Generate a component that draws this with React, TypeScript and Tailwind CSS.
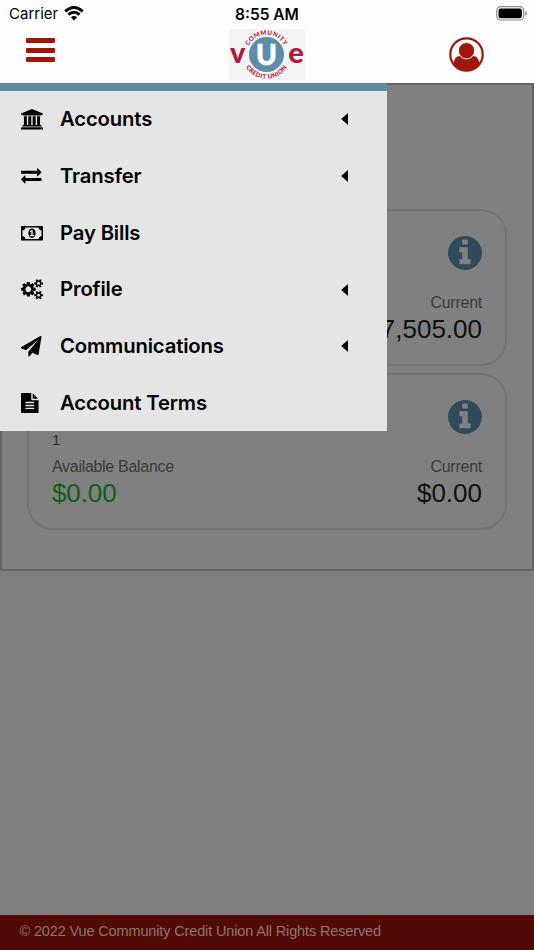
import type { ReactNode } from "react";

const icons = {
  bank: "M960 0l960 384v128h-128q0 26-20.5 45t-48.5 19h-1526q-28 0-48.5-19t-20.5-45h-128v-128zM256 640h256v768h128v-768h256v768h128v-768h256v768h128v-768h256v768h59q28 0 48.5 19t20.5 45v64h-1664v-64q0-26 20.5-45t48.5-19h59v-768zM1851 1600q28 0 48.5 19t20.5 45v128h-1920v-128q0-26 20.5-45t48.5-19h1782z",
  exchange: "M1792 1088v192q0 13-9.500 22.500t-22.500 9.500h-1376v192q0 13-9.500 22.500t-22.500 9.500q-12 0-24-10l-319-320q-9-9-9-22 0-14 9-23l320-320q9-9 23-9 13 0 22.500 9.500t9.500 22.500v192h1376q13 0 22.500 9.500t9.500 22.500zM1792 544q0 14-9 23l-320 320q-9 9-23 9-13 0-22.500-9.500t-9.500-22.500v-192h-1376q-13 0-22.500-9.500t-9.500-22.500v-192q0-13 9.500-22.500t22.500-9.500h1376v-192q0-14 9-23t23-9q12 0 24 10l319 319q9 9 9 23z",
  money: "M768 1152h384v-96h-128v-448h-114l-148 137 77 80q42-37 55-57h2v288h-128v96zM1280 896q0 70-21 142t-59.500 134-101.500 101-138 39-138-39-101.500-101-59.500-134-21-142 21-142 59.500-134 101.500-101 138-39 138 39 101.500 101 59.500 134 21 142zM1792 1152v-512q-106 0-181-75t-75-181h-1152q0 106-75 181t-181 75v512q106 0 181 75t75 181h1152q0-106 75-181t181-75zM1920 320v1152q0 26-19 45t-45 19h-1792q-26 0-45-19t-19-45v-1152q0-26 19-45t45-19h1792q26 0 45 19t19 45z",
  cogs: "M896 896q0-106-75-181t-181-75-181 75-75 181 75 181 181 75 181-75 75-181zm768 512q0-52-38-90t-90-38-90 38-38 90q0 53 37.500 90.500t90.500 37.500 90.500-37.500 37.500-90.500zm0-1024q0-52-38-90t-90-38-90 38-38 90q0 53 37.500 90.500t90.500 37.500 90.500-37.500 37.500-90.500zm-384 421v185q0 10-7 19.500t-16 10.500l-155 24q-11 35-32 76 34 48 90 115 7 11 7 20 0 12-7 19-23 30-82.500 89.500t-78.500 59.500q-11 0-21-7l-115-90q-37 19-77 31-11 108-23 155-7 24-30 24h-186q-11 0-20-7.500t-10-17.500l-23-153q-34-10-75-31l-118 89q-7 7-20 7-11 0-21-8-144-133-144-160 0-9 7-19 10-14 41-53t47-61q-23-44-35-82l-152-24q-10-1-17-9.500t-7-19.500v-185q0-10 7-19.500t16-10.500l155-24q11-35 32-76-34-48-90-115-7-11-7-20 0-12 7-20 22-30 82-89t79-59q11 0 21 7l115 90q34-18 77-32 11-108 23-154 7-24 30-24h186q11 0 20 7.500t10 17.500l23 153q34 10 75 31l118-89q8-7 20-7 11 0 21 8 144 133 144 160 0 8-7 19-12 16-42 54t-45 60q23 48 34 82l152 23q10 2 17 10.500t7 19.500zm640 533v140q0 16-149 31-12 27-30 52 51 113 51 138 0 4-4 7-122 71-124 71-8 0-46-47t-52-68q-20 2-30 2t-30-2q-14 21-52 68t-46 47q-2 0-124-71-4-3-4-7 0-25 51-138-18-25-30-52-149-15-149-31v-140q0-16 149-31 13-29 30-52-51-113-51-138 0-4 4-7 4-2 35-20t59-34 30-16q8 0 46 46.500t52 67.500q20-2 30-2t30 2q51-71 92-112l6-2q4 0 124 70 4 3 4 7 0 25-51 138 17 23 30 52 149 15 149 31zm0-1024v140q0 16-149 31-12 27-30 52 51 113 51 138 0 4-4 7-122 71-124 71-8 0-46-47t-52-68q-20 2-30 2t-30-2q-14 21-52 68t-46 47q-2 0-124-71-4-3-4-7 0-25 51-138-18-25-30-52-149-15-149-31v-140q0-16 149-31 13-29 30-52-51-113-51-138 0-4 4-7 4-2 35-20t59-34 30-16q8 0 46 46.500t52 67.500q20-2 30-2t30 2q51-71 92-112l6-2q4 0 124 70 4 3 4 7 0 25-51 138 17 23 30 52 149 15 149 31z",
  plane: "M1764 11q33 24 27 64l-256 1536q-5 29-32 45-14 8-31 8-11 0-24-5l-453-185-242 295q-18 23-49 23-13 0-22-4-19-7-30.500-23.500t-11.500-36.500v-349l864-1059-1069 925-395-162q-37-14-40-55-2-40 32-59l1664-960q15-9 32-9 20 0 36 11z",
  file: "M1468 476q14 14 28 36h-472v-472q22 14 36 28zM992 640h544v1056q0 40-28 68t-68 28h-1344q-40 0-68-28t-28-68v-1600q0-40 28-68t68-28h800v544q0 40 28 68t68 28zM1152 1376v-64q0-14-9-23t-23-9h-704q-14 0-23 9t-9 23v64q0 14 9 23t23 9h704q14 0 23-9t9-23zM1152 1120v-64q0-14-9-23t-23-9h-704q-14 0-23 9t-9 23v64q0 14 9 23t23 9h704q14 0 23-9t9-23zM1152 864v-64q0-14-9-23t-23-9h-704q-14 0-23 9t-9 23v64q0 14 9 23t23 9h704q14 0 23-9t9-23z",
  info: "M1152 1376v-160q0-14-9-23t-23-9h-96v-512q0-14-9-23t-23-9h-320q-14 0-23 9t-9 23v160q0 14 9 23t23 9h96v320h-96q-14 0-23 9t-9 23v160q0 14 9 23t23 9h448q14 0 23-9t9-23zM1024 480v-160q0-14-9-23t-23-9h-192q-14 0-23 9t-9 23v160q0 14 9 23t23 9h192q14 0 23-9t9-23zM1664 896q0 209-103 385.500t-279.500 279.500-385.500 103-385.500-103-279.500-279.500-103-385.500 103-385.500 279.500-279.500 385.500-103 385.500 103 279.500 279.500 103 385.500z",
};

const menu = [
  { label: "Accounts", icon: icons.bank, expandable: true },
  { label: "Transfer", icon: icons.exchange, expandable: true },
  { label: "Pay Bills", icon: icons.money, expandable: false },
  { label: "Profile", icon: icons.cogs, expandable: true },
  { label: "Communications", icon: icons.plane, expandable: true },
  { label: "Account Terms", icon: icons.file, expandable: false },
];

function StatusBar() {
  return (
    <div className="grid h-[28px] grid-cols-3 items-center leading-[27px] text-black">
      <div className="flex items-center gap-[6px] pb-px pl-[9px]">
        <span className="text-[15px]">Carrier</span>
        <svg className="h-[15px] w-5" viewBox="0 0 20 15" fill="none" stroke="#000" strokeWidth="2.9">
          <path d="M1.300 5.300Q10-2.300 18.700 5.300" />
          <path d="M4.400 8.700Q10 3.700 15.600 8.700" />
          <path d="M6.900 11.200Q10 8.600 13.100 11.200L10 14.400Z" fill="#000" stroke="none" />
        </svg>
      </div>
      <span className="text-center text-[15.500px] font-semibold">8:55 AM</span>
      <div className="flex justify-end pr-[7px] pb-px">
        <svg className="h-[15px] w-[31px]" viewBox="0 0 31 15">
          <rect x="0.700" y="0.700" width="27" height="13.300" rx="4" fill="none" stroke="#8c8c8c" strokeWidth="1.200" />
          <rect x="2.500" y="2.500" width="23.400" height="9.700" rx="2.300" />
          <path d="M29.200 5v4.800q1.700-.8 1.700-2.400T29.200 5z" fill="#8c8c8c" />
        </svg>
      </div>
    </div>
  );
}

function Logo() {
  return (
    <svg className="h-[51px] w-[76px] bg-[#f4f4f4]" viewBox="0 0 76 51">
      <defs>
        <path id="arc-top" d="M17.700 25.500A19.800 19.800 0 0 1 57.300 25.500" />
        <path id="arc-bottom" d="M13.300 25.500A24.200 24.200 0 0 0 61.700 25.500" />
      </defs>
      <circle cx="37.500" cy="25.500" r="17.500" fill="#5f8da8" />
      <g fontFamily="Lato, sans-serif" fontWeight="900" fill="#b5173b" textAnchor="middle">
        <text x="8.700" y="33.500" fontSize="29">v</text>
        <text x="67" y="33.500" fontSize="29">e</text>
        <text x="37.500" y="36" fontSize="28" fill="#fff" stroke="#fff" strokeWidth="0.600">U</text>
        <g fontSize="6.200">
          <text letterSpacing="0.450"><textPath href="#arc-top" startOffset="50%">COMMUNITY</textPath></text>
          <text letterSpacing="0.400"><textPath href="#arc-bottom" startOffset="50%">CREDIT UNION</textPath></text>
        </g>
      </g>
    </svg>
  );
}

function Header() {
  return (
    <header className="h-[83px] bg-[#fefefe] font-['Inter',sans-serif]">
      <StatusBar />
      <div className="flex h-[55px] items-start justify-between pr-[50px] pl-[26px]">
        <button aria-label="Menu" className="flex w-[53px] flex-col gap-[4.500px] pt-[10px]">
          <span className="h-[5px] w-[29px] rounded-[1px] bg-[#a1160c]" />
          <span className="h-[5px] w-[29px] rounded-[1px] bg-[#a1160c]" />
          <span className="h-[5px] w-[29px] rounded-[1px] bg-[#a1160c]" />
        </button>
        <div className="pt-px pl-[23px]">
          <Logo />
        </div>
        <button aria-label="User" className="flex w-[53px] justify-end pt-[9px]">
          <svg className="h-[35px] w-[35px]" viewBox="0 0 35 35" fill="#a1160c">
            <path d="M4.300 28C5 22 7 19 11 19H24C28 19 30 22 30.700 28Q25.500 34 17.500 34T4.300 28z" />
            <circle cx="17.500" cy="13.700" r="8.200" stroke="#fefefe" strokeWidth="1" />
            <circle cx="17.500" cy="17.500" r="16.200" fill="none" stroke="#a1160c" strokeWidth="2.200" />
          </svg>
        </button>
      </div>
    </header>
  );
}

function AccountCard({ current, children }: { current: string; children?: ReactNode }) {
  return (
    <div className="flex h-[157px] justify-between rounded-[26px] border-2 border-[#757575] px-[23px] pt-[25px]">
      <div className="flex flex-col justify-end pb-[19px]">{children}</div>
      <div className="flex flex-col items-end">
        <svg className="h-[34px] w-[34px]" viewBox="128 128 1536 1536" fill="#304b5b">
          <path d={icons.info} />
        </svg>
        <span className="mt-[23px] text-[16px] leading-5 tracking-[-0.250px] text-[#3b3b3b]">Current</span>
        <span className="text-[26px] leading-8 text-[#101010]">{current}</span>
      </div>
    </div>
  );
}

function Drawer() {
  return (
    <nav className="absolute top-[83px] left-0 h-[348px] w-[387px] border-t-8 border-[#5f8ba6] bg-[#e5e5e5] font-['Inter',sans-serif]">
      {menu.map((item) => (
        <a key={item.label} className="flex h-[56.750px] items-center pr-[39px] pl-[21px] text-black">
          <span className="flex w-[39px]">
            <svg className="h-[20.500px] w-[22px]" viewBox="0 0 1920 1792" preserveAspectRatio="xMinYMid meet">
              <path d={item.icon} />
            </svg>
          </span>
          <span className="flex-1 text-[20.250px] font-semibold tracking-[-0.140px]">{item.label}</span>
          {item.expandable && (
            <svg className="h-3 w-[7px]" viewBox="0 0 7 12">
              <path d="M7 .1v11.800L.2 6z" />
            </svg>
          )}
        </a>
      ))}
    </nav>
  );
}

export default function App() {
  return (
    <div className="relative flex h-[950px] w-[534px] flex-col overflow-hidden bg-[#808080] font-['Liberation_Sans',sans-serif]">
      <Header />
      <main className="flex-1">
        <section className="flex h-[488px] flex-col gap-[7px] border-2 border-[#656565] px-[25px] pt-[124px]">
          <AccountCard current="$7,505.00" />
          <AccountCard current="$0.00">
            <span className="text-[15px] leading-5 text-[#303030]">1</span>
            <span className="mt-[7px] text-[16px] leading-5 tracking-[-0.3px] text-[#3b3b3b]">Available Balance</span>
            <span className="text-[26px] leading-8 tracking-[-0.1px] text-[#0d6113]">$0.00</span>
          </AccountCard>
        </section>
      </main>
      <footer className="flex h-[35px] items-center bg-[#520a06] pb-[2px] pl-[19.500px] text-[14.500px] tracking-[-0.140px] text-[#8f7371]">
        © 2022 Vue Community Credit Union All Rights Reserved
      </footer>
      <Drawer />
    </div>
  );
}
